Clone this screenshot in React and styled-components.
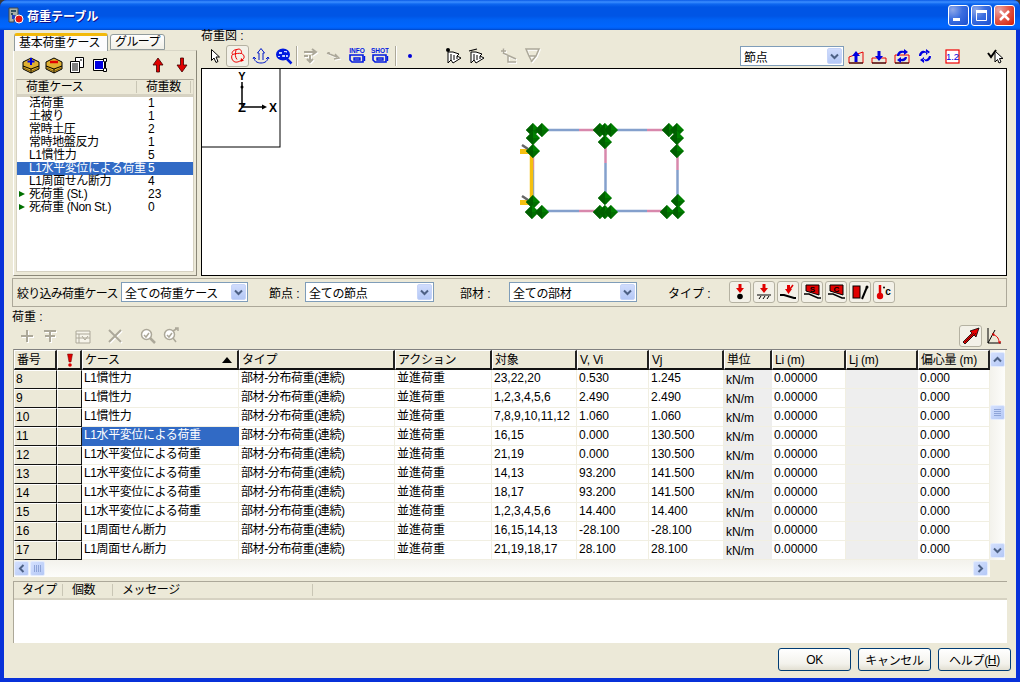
import React from 'react'
import styled, { createGlobalStyle } from 'styled-components'

const Global = createGlobalStyle`
  html, body { margin: 0; padding: 0; background: #3a3a3a; overflow: hidden; }
  * { box-sizing: border-box; }
`

const Window = styled.div`
  width: 1020px;
  height: 682px;
  display: flex;
  flex-direction: column;
  background: #0831d9;
  font-family: "Liberation Sans", "Noto Sans CJK JP", sans-serif;
  font-size: 12px;
  color: #000;
  border-radius: 7px 7px 0 0;
  overflow: hidden;
`

const TitleBar = styled.div`
  height: 30px;
  flex: none;
  display: flex;
  align-items: center;
  padding: 0 5px 0 7px;
  background: linear-gradient(180deg, #0a5ae6 0, #3c8eff 2px, #0f68f0 4px, #0055e5 7px, #0055e5 16px, #0062f5 20px, #0066ff 27px, #0058e8 29px, #0043bf 30px);
`

const TitleText = styled.span`
  margin-left: 2px;
  color: #fff;
  font-size: 12px;
  font-weight: bold;
  text-shadow: 1px 1px 0 #0f1089;
`

const TitleButtons = styled.div`
  margin-left: auto;
  display: flex;
  gap: 2px;
`

const CaptionButton = styled.div`
  width: 21px;
  height: 21px;
  border: 1px solid #fff;
  border-radius: 3px;
  display: flex;
  align-items: center;
  justify-content: center;
  background: ${p => p.$close
    ? 'radial-gradient(circle at 20% 20%, #e8a6a6 0, #e35b4c 45%, #d41a00 100%)'
    : 'radial-gradient(circle at 20% 20%, #8fa8e8 0, #3b6ee0 45%, #1a4fd0 100%)'};
`

const Body = styled.div`
  flex: 1;
  margin: 0 4px 4px;
  background: #ece9d8;
  display: flex;
  flex-direction: column;
  padding: 0 9px;
  min-height: 0;
`

const TopSection = styled.div`
  height: 248px;
  flex: none;
  display: flex;
`

const LeftPane = styled.div`
  width: 184px;
  flex: none;
  padding: 2px 0 2px;
  display: flex;
  flex-direction: column;
`

const TabStrip = styled.div`
  height: 18px;
  flex: none;
  display: flex;
  align-items: flex-end;
  padding-left: 1px;
  position: relative;
  z-index: 1;
`

const Tab = styled.div`
  height: ${p => (p.$active ? 18 : 16)}px;
  width: ${p => (p.$active ? 94 : 55)}px;
  margin-left: ${p => (p.$active ? 0 : 2)}px;
  margin-bottom: ${p => (p.$active ? -1 : 0)}px;
  padding-left: 4px;
  line-height: ${p => (p.$active ? 15 : 15)}px;
  white-space: nowrap;
  letter-spacing: ${p => (p.$active ? -0.3 : -0.6)}px;
  background: ${p => (p.$active ? '#fcfcfe' : 'linear-gradient(180deg, #fff, #f0efe6)')};
  border: 1px solid #919b9c;
  border-bottom: ${p => (p.$active ? 'none' : '1px solid #919b9c')};
  border-radius: 3px 3px 0 0;
  border-top: ${p => (p.$active ? '3px solid #f2b90a' : '1px solid #919b9c')};
`

const TabPanel = styled.div`
  flex: 1;
  border: 1px solid #8a8778;
  border-top-color: #d8d5c6;
  border-left-color: #fff;
  padding: 0 2px 3px 2px;
  display: flex;
  flex-direction: column;
  min-height: 0;
`

const PanelTools = styled.div`
  height: 28px;
  flex: none;
  display: flex;
  align-items: center;
  padding-left: 3px;
`

const PanelTool = styled.div`
  width: 23px;
  height: 20px;
  margin-left: ${p => p.$left || 0}px;
  display: flex;
  align-items: center;
  justify-content: center;
`

const CaseList = styled.div`
  flex: 1;
  background: #fff;
  border: 1px solid #d6d2c2;
  border-top-color: #aca899;
  min-height: 0;
`

const ListHead = styled.div`
  height: 17px;
  display: flex;
  align-items: center;
  background: #ece9d8;
  border-bottom: 3px solid #d6d2c2;
  letter-spacing: -0.4px;
`

const ListHeadCell = styled.div`
  width: ${p => p.$w}px;
  padding-left: ${p => p.$pad}px;
  height: 12px;
  line-height: 12px;
  border-right: 1px solid #c9c6b5;
`

const ListRow = styled.div`
  height: 13px;
  line-height: 13px;
  display: flex;
  white-space: nowrap;
  background: ${p => (p.$selected ? '#316ac5' : 'transparent')};
  color: ${p => (p.$selected ? '#fff' : '#000')};
`

const ListName = styled.div`
  width: 131px;
  padding-left: 12px;
  letter-spacing: -0.4px;
  position: relative;
`

const Expander = styled.span`
  position: absolute;
  left: 2px;
  top: 3px;
  width: 0;
  height: 0;
  border-left: 6px solid #007000;
  border-top: 3.5px solid transparent;
  border-bottom: 3.5px solid transparent;
`

const RightPane = styled.div`
  flex: 1;
  margin-left: 4px;
  display: flex;
  flex-direction: column;
  min-width: 0;
`

const PaneLabel = styled.div`
  height: 14px;
  line-height: 12px;
  flex: none;
`

const ViewTools = styled.div`
  height: 24px;
  flex: none;
  display: flex;
  align-items: center;
  padding-left: 2px;
`

const ToolButton = styled.div`
  width: 23px;
  height: 22px;
  flex: none;
  margin-left: ${p => p.$left || 0}px;
  display: flex;
  align-items: center;
  justify-content: center;
  border-radius: 3px;
  border: 1px solid ${p => (p.$pressed ? '#b5b2a2' : 'transparent')};
  background: ${p => (p.$pressed ? '#f3f1e8' : 'transparent')};
`

const ToolSep = styled.div`
  width: 2px;
  height: 20px;
  flex: none;
  margin: 0 1px 0 ${p => p.$left || 1}px;
  border-left: 1px solid #aca899;
  border-right: 1px solid #fff;
`

const Canvas = styled.div`
  height: 208px;
  flex: none;
  border: 1px solid #000;
  background: #fff;
`

const CanvasSvg = styled.svg`
  display: block;
`

const ComboBox = styled.div`
  width: ${p => p.$w}px;
  height: 20px;
  flex: none;
  margin-left: ${p => p.$left || 0}px;
  border: 1px solid #7f9db9;
  background: #fff;
  display: flex;
  align-items: center;
  padding: 0 1px 0 3px;
  letter-spacing: -0.3px;
  white-space: nowrap;
`

const ComboText = styled.span`
  flex: 1;
`

const ComboArrow = styled.div`
  width: 15px;
  height: 16px;
  flex: none;
  border-radius: 2px;
  background: linear-gradient(180deg, #d0dcfc, #b4c8f6);
  border: 1px solid #c6d4f8;
  display: flex;
  align-items: center;
  justify-content: center;
`

const FilterBar = styled.div`
  height: 29px;
  flex: none;
  margin-left: -1px;
  border: 1px solid #aca899;
  display: flex;
  align-items: center;
  padding: 0 0 1px 4px;
  white-space: nowrap;
`

const FilterLabel = styled.div`
  width: ${p => p.$w}px;
  margin-left: ${p => p.$left || 0}px;
  flex: none;
  letter-spacing: ${p => (p.$tight ? -0.75 : 0)}px;
`

const TypeGroup = styled.div`
  display: flex;
  gap: 2px;
  flex: none;
`

const TypeButton = styled.div`
  width: 22px;
  height: 22px;
  border: 1px solid #b5b2a2;
  border-radius: 3px;
  background: #f3f1e8;
  display: flex;
  align-items: center;
  justify-content: center;
`

const SectionLabel = styled.div`
  height: 18px;
  flex: none;
  margin-left: -1px;
  padding-top: 3px;
  line-height: 14px;
`

const LoadTools = styled.div`
  height: 24px;
  flex: none;
  display: flex;
  align-items: flex-start;
`

const GridFrame = styled.div`
  height: 228px;
  flex: none;
  border-top: 1px solid #808080;
  border-left: 1px solid #aca899;
  display: grid;
  grid-template-columns: 976px 17px;
  grid-template-rows: 210px 17px;
`

const GridMain = styled.div`
  background: #fff;
  overflow: hidden;
`

const GridRow = styled.div`
  display: grid;
  grid-template-columns: 43px 25px 157px 156px 97px 85px 72px 75px 48px 74px 72px 72px;
  height: ${p => (p.$head ? 20 : 19)}px;
`

const HeadCell = styled.div`
  background: #ece9d8;
  border-top: 1px solid #fff;
  border-left: 1px solid #fff;
  border-right: 2px solid #222;
  border-bottom: 2px solid #111;
  padding: 1px 0 0 2px;
  line-height: 15px;
  letter-spacing: -0.2px;
  white-space: nowrap;
  display: flex;
  align-items: center;
  justify-content: ${p => (p.$center ? 'center' : 'flex-start')};
`

const SortMark = styled.span`
  margin-left: auto;
  margin-right: 5px;
  width: 0;
  height: 0;
  border-left: 5px solid transparent;
  border-right: 5px solid transparent;
  border-bottom: 6px solid #000;
`

const FixedCell = styled.div`
  background: #ece9d8;
  border-top: 1px solid #fff;
  border-left: 1px solid #fff;
  border-right: 1px solid #111;
  border-bottom: 1px solid #111;
  padding-left: 1px;
  line-height: 17px;
`

const DataCell = styled.div`
  background: ${p => (p.$selected ? '#316ac5' : p.$shaded ? '#eeeeee' : '#fff')};
  color: ${p => (p.$selected ? '#fff' : '#000')};
  border-right: 1px solid ${p => (p.$selected || p.$shaded ? 'transparent' : '#f1efe2')};
  border-bottom: 1px solid ${p => (p.$selected ? 'transparent' : '#f1efe2')};
  padding-left: 2px;
  padding-top: ${p => (p.$unit ? 2 : 0)}px;
  line-height: 17px;
  white-space: nowrap;
  overflow: hidden;
  letter-spacing: ${p => (p.$tight ? -0.4 : 0)}px;
`

const VScroll = styled.div`
  grid-row: 1;
  grid-column: 2;
  width: 15px;
  padding-top: 2px;
  background: linear-gradient(90deg, #f3f2ec, #fdfdfb);
  display: flex;
  flex-direction: column;
  align-items: center;
`

const HScroll = styled.div`
  grid-row: 2;
  grid-column: 1;
  background: linear-gradient(180deg, #f3f2ec, #fdfdfb);
  display: flex;
  align-items: center;
`

const ScrollButton = styled.div`
  width: 15px;
  height: 15px;
  flex: none;
  margin-left: ${p => (p.$h ? p.$left || 0 : 0)}px;
  margin-top: ${p => (!p.$h ? p.$top || 0 : 0)}px;
  border-radius: 2px;
  border: 1px solid #e4ecfd;
  background: linear-gradient(135deg, #d4e0fd, #b4c8f6);
  display: flex;
  align-items: center;
  justify-content: center;
`

const MessageList = styled.div`
  height: 62px;
  flex: none;
  margin-top: 4px;
  background: #fff;
  border-top: 1px solid #aca899;
  border-left: 1px solid #aca899;
`

const MessageHead = styled.div`
  height: 18px;
  display: flex;
  align-items: center;
  background: #ece9d8;
  border-bottom: 2px solid #d6d2c2;
  letter-spacing: -0.4px;
`

const MessageCell = styled.div`
  width: ${p => p.$w}px;
  padding-left: ${p => p.$pad}px;
  height: 12px;
  line-height: 12px;
  border-right: 1px solid #c9c6b5;
`

const Footer = styled.div`
  height: 35px;
  flex: none;
  margin-right: -4px;
  display: flex;
  justify-content: flex-end;
  align-items: flex-start;
  gap: 7px;
  padding-top: 5px;
`

const DialogButton = styled.div`
  width: 73px;
  height: 23px;
  border: 1px solid #003c74;
  border-radius: 3px;
  background: linear-gradient(180deg, #fff 0, #f3f2ec 70%, #e2dfd2 100%);
  display: flex;
  align-items: center;
  justify-content: center;
  letter-spacing: -0.3px;
`

const Underlined = styled.span`
  text-decoration: underline;
`

/* toolbar and canvas drawings */

const Ico = ({ w = 20, h = 20, children }) => (
  <svg width={w} height={h} viewBox={`0 0 ${w} ${h}`}>{children}</svg>
)

const Chevron = ({ dir = 'down', color = '#4d6185' }) => {
  const rot = { down: 0, up: 180, left: 90, right: -90 }[dir]
  return (
    <svg width="9" height="9" viewBox="0 0 9 9">
      <path d="M1 2.5l3.5 3.5L8 2.5" fill="none" stroke={color} strokeWidth="2" transform={`rotate(${rot} 4.5 4.5)`} />
    </svg>
  )
}

const AppIcon = () => (
  <svg width="18" height="18" viewBox="0 0 18 18">
    <path d="M2 2h9v8H7v6H2z" fill="#a8b0a8" stroke="#40484c" />
    <path d="M4 4h5v2H4zM4 7h2v2H4z" fill="#305060" />
    <path d="M5 9h3v4H5z" fill="#2040c0" />
    <circle cx="12" cy="13" r="4" fill="#e01818" stroke="#fff" />
  </svg>
)

const BoxIcon = ({ mark }) => (
  <Ico w={18} h={18}>
    <path d="M1 6l8-4 8 4v7l-8 4-8-4z" fill="#e0b030" stroke="#000" />
    <path d="M1 10l8 3 8-3M9 13v4" fill="none" stroke="#000" />
    <path d="M2 12l6 3M10 15l6-3" stroke="#806010" />
    {mark === 'plus' && <path d="M9 2v7M5.500 5.500h7" stroke="#0000e0" strokeWidth="2" />}
    {mark === 'minus' && <path d="M5 6h8" stroke="#e00000" strokeWidth="2.500" />}
  </Ico>
)

const CopyIcon = () => (
  <Ico w={16} h={18}>
    <path d="M6.500 1.500h8v10h-8z" fill="#fff" stroke="#000" />
    <path d="M1.500 5.500h9v11h-9z" fill="#fff" stroke="#000" />
    <path d="M3 8h6M3 10h6M3 12h6M3 14h6M11 4h2" stroke="#000" />
  </Ico>
)

const FrameIcon = () => (
  <Ico w={16} h={16}>
    <path d="M1.500 2.500h12v11h-12z" fill="#fff" stroke="#000" />
    <path d="M3 4h8v8H3z" fill="#0000e0" />
    <path d="M11.500 1.500h3v3h-1v7h1v3h-3v-3h1v-7h-1z" fill="#fff" stroke="#000" />
  </Ico>
)

const RedArrow = ({ down }) => (
  <Ico w={12} h={16}>
    <path d={down ? 'M4.500 1h3v7H11l-5 7-5-7h3.500z' : 'M4.500 15h3V8H11L6 1 1 8h3.500z'} fill="#e00000" stroke="#400000" strokeWidth="0.800" />
  </Ico>
)

const Cursor = () => (
  <Ico w={14} h={16}>
    <path d="M3.500 1.500v11l2.500-2.500 2 4.500 2-1-2-4.500h3.500z" fill="#fff" stroke="#000" />
  </Ico>
)

const RotateIcon = () => (
  <Ico w={18} h={18}>
    <path d="M8 2.500c3-1.500 5 1 4.500 4C16 8 16 12 12.500 13c-2 1.500-5 3-7.500 1.500C2.500 13 2 9 3.500 7.500 2 5 5 2.500 8 2.500zM7 3c-1 4-1 7 1 9.500" fill="none" stroke="#f00000" />
    <path d="M3.500 7.500c3-1 7-1.500 9-1" fill="none" stroke="#f00000" />
    <path d="M12 11l3 2.500-3.500 1.500z" fill="#f00000" />
  </Ico>
)

const AnchorIcon = () => (
  <Ico w={18} h={18}>
    <path d="M7 13V6H5.500L9 1.500 12.500 6H11v7" fill="none" stroke="#0018c8" />
    <path d="M2 10c0 4 3 6 7 6s7-2 7-6M2 10l-1 2M2 10l2 2M16 10l1 2M16 10l-2 2" fill="none" stroke="#0018c8" />
  </Ico>
)

const ZoomBallIcon = () => (
  <Ico w={18} h={18}>
    <ellipse cx="8" cy="7.500" rx="7" ry="6" fill="#0018e0" />
    <path d="M4 5h3v2H4zM9 4h3v2H9zM7 8h3v2H7zM3 9h2v1H3zM11 8h2v2h-2z" fill="#c8d4ff" />
    <circle cx="10" cy="9" r="3.500" fill="none" stroke="#0018e0" />
    <path d="M12 12l4.500 4.500" stroke="#0018e0" strokeWidth="2.500" />
  </Ico>
)

const GrayShadow = ({ d, width = 1.500 }) => (
  <>
    <path d={d} fill="none" stroke="#fff" strokeWidth={width} transform="translate(1 1)" />
    <path d={d} fill="none" stroke="#aca899" strokeWidth={width} />
  </>
)

const MoveGrayA = () => (
  <Ico w={18} h={18}><GrayShadow d="M2 5h12M10 2l4 3-4 3M8 8v7M5 12l3 3 3-3M2 9h4" width={2} /></Ico>
)

const MoveGrayB = () => (
  <Ico w={18} h={18}><GrayShadow d="M2 6l10 4M10 7l4 4-5 1M3 6h2" width={1.500} /></Ico>
)

const CameraIcon = ({ label }) => (
  <Ico w={18} h={18}>
    <text x="9" y="6" fontSize="6.500" fontWeight="bold" textAnchor="middle" fill="#0018e0" fontFamily="'Liberation Sans', sans-serif">{label}</text>
    <path d="M2 8h13v7H4l-2-2z" fill="none" stroke="#0018e0" strokeWidth="1.600" />
    <path d="M6 11h6v2H6zM16.500 9v5" fill="none" stroke="#0018e0" strokeWidth="1.400" />
  </Ico>
)

const NodeDot = () => (
  <Ico w={10} h={10}><circle cx="5" cy="5" r="2" fill="#0000d8" /></Ico>
)

const StripedCursor = ({ variant }) => (
  <Ico w={18} h={18}>
    {variant === 'dot' && <circle cx="3" cy="3" r="2" fill="#000" />}
    {variant === 'line' && <path d="M1 4l8-2" stroke="#000" strokeWidth="1.200" />}
    <path d="M3 5v11l3-3 2 3 8-5-4-2 2-2-6-2z" fill="#fff" stroke="#000" />
    <path d="M6 7v6M9 8v5M12 9v3" stroke="#000" />
  </Ico>
)

const GrayLineA = () => (
  <Ico w={18} h={18}><GrayShadow d="M1 4h5M3.500 1.500v5M3 6l13 6M8 9v6h8" /></Ico>
)

const GrayLineB = () => (
  <Ico w={18} h={18}><GrayShadow d="M3 2h13l-3 7H6zM6 9l3 6M13 9L8 15" /></Ico>
)

const UpLoadIcon = () => (
  <Ico w={16} h={16}>
    <path d="M1 15V9l14-5v11z" fill="none" stroke="#e80000" />
    <path d="M1 15h14" stroke="#000" />
    <path d="M6.500 14V8H4l4-5 4 5H9.500v6z" fill="#0000e0" />
  </Ico>
)

const DownLoadIcon = () => (
  <Ico w={16} h={16}>
    <path d="M1 15v-5h14v5z" fill="none" stroke="#e80000" />
    <path d="M1 15h14" stroke="#000" />
    <path d="M6.500 3v5H4l4 5 4-5H9.500V3z" fill="#0000e0" />
  </Ico>
)

const SwapBoxIcon = () => (
  <Ico w={16} h={16}>
    <path d="M1 15V7h14v8z" fill="none" stroke="#e80000" />
    <path d="M1 15h14" stroke="#000" />
    <path d="M3 8c0-4 3-6 7-5V1l4 3-4 3V5C8 4 6 5 5 8z" fill="#0000e0" />
    <path d="M13 9c0 3-3 5-6 4v2l-4-3 4-3v2c2 0 3-1 4-2z" fill="#0000e0" />
  </Ico>
)

const SwapIcon = () => (
  <Ico w={16} h={16}>
    <path d="M2 8c0-4 3-6 7-5V1l4 3-4 3V5C7 4 5 5 4 8z" fill="#0000e0" />
    <path d="M14 8c0 4-3 6-7 5v2l-4-3 4-3v2c2 1 4 0 5-3z" fill="#0000e0" />
    <path d="M7 2l7 6M3 8l6 6" stroke="#fff" strokeDasharray="1 1" />
  </Ico>
)

const ValueIcon = () => (
  <Ico w={15} h={15}>
    <rect x="1" y="1" width="13" height="13" fill="#fff" stroke="#f00000" strokeWidth="1.200" />
    <text x="7.500" y="11" fontSize="9.500" textAnchor="middle" fill="#0000e0" fontFamily="'Liberation Sans', sans-serif">1.2</text>
  </Ico>
)

const CheckCursor = () => (
  <Ico w={18} h={18}>
    <path d="M1 6l3 4 5-7" fill="none" stroke="#000" strokeWidth="2" />
    <path d="M8 4v11l2.500-2.500 1.500 3.500 2-1-1.500-3.500H16z" fill="#fff" stroke="#000" />
  </Ico>
)

const PointLoad = () => (
  <Ico w={16} h={16}>
    <path d="M6.500 0h3v4H12L8 9 4 4h2.500z" fill="#e00000" />
    <circle cx="8" cy="12.500" r="2.800" fill="#000" />
  </Ico>
)

const GroundLoad = () => (
  <Ico w={18} h={16}>
    <path d="M7.500 0h3v4H13L9 9 5 4h2.500z" fill="#e00000" />
    <path d="M2 11h14M4 15l2-3M8 15l2-3M12 15l2-3" stroke="#000" />
  </Ico>
)

const MemberLoad = () => (
  <Ico w={18} h={16}>
    <path d="M1 11h4l10 3h2" fill="none" stroke="#000" strokeWidth="2" />
    <path d="M8 1h3v4h2L9.500 10 6 5h2z" fill="#e00000" />
    <path d="M14 1l-3 4" stroke="#e00000" strokeWidth="1.500" />
  </Ico>
)

const AreaLoad = ({ label }) => (
  <Ico w={18} h={16}>
    <path d="M3 1h13v10L3 7z" fill="#e00000" stroke="#000" />
    <path d="M1 10h5l9 4h3" fill="none" stroke="#000" strokeWidth="1.600" />
    <text x="9.500" y="8" fontSize="8" fontWeight="bold" textAnchor="middle" fill="#000" fontFamily="'Liberation Sans', sans-serif">{label}</text>
  </Ico>
)

const StrainLoad = () => (
  <Ico w={18} h={16}>
    <rect x="2" y="2" width="7" height="12" fill="#e00000" stroke="#000" />
    <path d="M11 15L16 3" stroke="#000" strokeWidth="2" />
    <circle cx="16" cy="3" r="1.500" fill="#000" />
  </Ico>
)

const TempLoad = () => (
  <Ico w={18} h={16}>
    <path d="M5 1v9" stroke="#e00000" strokeWidth="2.500" />
    <circle cx="5" cy="12" r="3.200" fill="#e00000" />
    <text x="13" y="11" fontSize="10" fontWeight="bold" textAnchor="middle" fill="#000" fontFamily="'Liberation Sans', sans-serif">c</text>
    <circle cx="9" cy="3.500" r="1" fill="#000" />
  </Ico>
)

const PlusGray = () => <Ico w={16} h={16}><GrayShadow d="M8 2v12M2 8h12" width={2} /></Ico>
const RowGray = () => <Ico w={16} h={16}><GrayShadow d="M2 3h12M3 8h10M8 3v11" width={2} /></Ico>
const TableGray = () => (
  <Ico w={18} h={16}>
    <path d="M2 3h14v12H2z" fill="#f6f4ea" stroke="#aca899" />
    <path d="M2 6h14M5 6v9M2 10h14M8 8l3 4 3-4" fill="none" stroke="#aca899" />
  </Ico>
)
const CrossGray = () => <Ico w={16} h={16}><GrayShadow d="M2 2l12 12M14 2L2 14" width={2} /></Ico>
const MagnifyGray = ({ arrow }) => (
  <Ico w={18} h={18}>
    <circle cx="7.500" cy="7.500" r="5" fill="#fff" stroke="#aca899" strokeWidth="1.500" />
    <path d="M5 8l2 2 3-4" fill="none" stroke="#aca899" strokeWidth="1.500" />
    <path d={arrow ? 'M11 4l5-3M13 1h3v3M11 11l3 4' : 'M11 11l5 5'} fill="none" stroke="#aca899" strokeWidth={arrow ? 1.500 : 2.500} />
  </Ico>
)

const RedPointer = () => (
  <Ico w={18} h={18}>
    <path d="M1 15l9-9-2-2 9-3-3 9-2-2-9 9z" fill="#e80000" stroke="#000" strokeWidth="0.800" />
    <path d="M3 15l9-9M5 15l9-9" stroke="#000" strokeWidth="0.500" />
  </Ico>
)

const AxisAngle = () => (
  <Ico w={16} h={18}>
    <path d="M2 1v15h13M2 16L9 3" fill="none" stroke="#000" />
    <path d="M7 8c3 0 6 3 6 7" fill="none" stroke="#e00000" />
    <path d="M6 6l3 1-2 2zM12 15l3-1-1 3z" fill="#e00000" />
  </Ico>
)

const Diamond = ({ x, y }) => (
  <g>
    <path d={`M${x} ${y - 7}l7 7-7 7-7-7z`} fill="#008000" />
    <path d={`M${x} ${y - 7}l-7 7 7 7z`} fill="#006000" />
    <path d={`M${x - 7} ${y}h14l-7 7z`} fill="#005c00" opacity="0.5" />
  </g>
)

// canvas coordinates are page coordinates minus the canvas origin (202, 69)
const nodes = [
  [331, 61], [340, 61], [331, 69], [331, 82], [331, 133], [330, 143], [340, 143],
  [398, 61], [403, 61], [409, 61], [403, 73], [403, 129], [398, 143], [403, 143], [409, 143],
  [467, 61], [475, 61], [475, 69], [475, 82], [476, 132], [476, 143], [465, 143],
]

const beams = [
  ['#84a0cc', 331, 61, 377, 61], ['#d888ac', 377, 61, 393, 61],
  ['#84a0cc', 403, 61, 445, 61], ['#d888ac', 445, 61, 461, 61], ['#84a0cc', 461, 61, 475, 61],
  ['#84a0cc', 331, 142, 377, 142], ['#d888ac', 377, 142, 393, 142],
  ['#84a0cc', 403, 142, 445, 142], ['#d888ac', 445, 142, 461, 142], ['#84a0cc', 461, 142, 475, 142],
  ['#d888ac', 403.500, 75, 403.500, 94], ['#84a0cc', 403.500, 94, 403.500, 135],
  ['#d888ac', 475.500, 75, 475.500, 101], ['#84a0cc', 475.500, 101, 475.500, 135],
  ['#d888ac', 331, 75, 331, 101], ['#84a0cc', 331, 101, 331, 135],
]

const ModelView = () => (
  <CanvasSvg width="804" height="206" viewBox="0 0 804 206">
    <rect x="-1" y="-1" width="79" height="79" fill="#fff" stroke="#000" />
    <path d="M40 38V13" stroke="#000" strokeWidth="1.500" />
    <circle cx="40" cy="18" r="1.500" fill="#000" />
    <path d="M40 38h22" stroke="#000" strokeWidth="1.500" />
    <path d="M60 35.500l5 2.500-5 2.500z" fill="#000" />
    <text x="40" y="11" fontSize="11" fontWeight="bold" textAnchor="middle" fontFamily="'Liberation Sans', sans-serif">Y</text>
    <text x="40" y="43" fontSize="13" fontWeight="bold" textAnchor="middle" fontFamily="'Liberation Sans', sans-serif">Z</text>
    <text x="71" y="43" fontSize="12" fontWeight="bold" textAnchor="middle" fontFamily="'Liberation Sans', sans-serif">X</text>
    {beams.map(([c, x1, y1, x2, y2], i) => (
      <line key={i} x1={x1} y1={y1} x2={x2} y2={y2} stroke={c} strokeWidth="2.500" />
    ))}
    <path d="M329.500 84v50" stroke="#f5c010" strokeWidth="3.500" />
    <path d="M318 80h9v5h-9zM318 131h9v5h-9z" fill="#f5c010" />
    <path d="M320 76l6 4M320 127l6 4" stroke="#666" strokeWidth="2.500" />
    {nodes.map(([x, y], i) => <Diamond key={i} x={x} y={y} />)}
  </CanvasSvg>
)

const cases = [
  ['活荷重', '1'], ['土被り', '1'], ['常時土圧', '2'], ['常時地盤反力', '1'], ['L1慣性力', '5'],
  ['L1水平変位による荷重', '5', 'selected'], ['L1周面せん断力', '4'],
  ['死荷重 (St.)', '23', 'group'], ['死荷重 (Non St.)', '0', 'group'],
]

const columns = ['番号', '', 'ケース', 'タイプ', 'アクション', '対象', 'V, Vi', 'Vj', '単位', 'Li (m)', 'Lj (m)', '偏心量 (m)']

const INERTIA = 'L1慣性力'
const DISPLACEMENT = 'L1水平変位による荷重'
const SHEAR = 'L1周面せん断力'

const loads = [
  [8, INERTIA, '23,22,20', '0.530', '1.245'],
  [9, INERTIA, '1,2,3,4,5,6', '2.490', '2.490'],
  [10, INERTIA, '7,8,9,10,11,12', '1.060', '1.060'],
  [11, DISPLACEMENT, '16,15', '0.000', '130.500', true],
  [12, DISPLACEMENT, '21,19', '0.000', '130.500'],
  [13, DISPLACEMENT, '14,13', '93.200', '141.500'],
  [14, DISPLACEMENT, '18,17', '93.200', '141.500'],
  [15, DISPLACEMENT, '1,2,3,4,5,6', '14.400', '14.400'],
  [16, SHEAR, '16,15,14,13', '-28.100', '-28.100'],
  [17, SHEAR, '21,19,18,17', '28.100', '28.100'],
]

const Combo = ({ w, left, text }) => (
  <ComboBox $w={w} $left={left}>
    <ComboText>{text}</ComboText>
    <ComboArrow><Chevron /></ComboArrow>
  </ComboBox>
)

const App = () => (
  <Window>
    <Global />
    <TitleBar>
      <AppIcon />
      <TitleText>荷重テーブル</TitleText>
      <TitleButtons>
        <CaptionButton>
          <svg width="13" height="13" viewBox="0 0 13 13"><path d="M1 9h7v3H1z" fill="#fff" /></svg>
        </CaptionButton>
        <CaptionButton>
          <svg width="13" height="13" viewBox="0 0 13 13"><path d="M1.500 3.500h10v8h-10z" fill="none" stroke="#fff" /><path d="M1 1h11v3H1z" fill="#fff" /></svg>
        </CaptionButton>
        <CaptionButton $close>
          <svg width="13" height="13" viewBox="0 0 13 13"><path d="M2 2l9 9M11 2l-9 9" stroke="#fff" strokeWidth="2.500" /></svg>
        </CaptionButton>
      </TitleButtons>
    </TitleBar>
    <Body>
      <TopSection>
        <LeftPane>
          <TabStrip>
            <Tab $active>基本荷重ケース</Tab>
            <Tab>グループ</Tab>
          </TabStrip>
          <TabPanel>
            <PanelTools>
              <PanelTool><BoxIcon mark="plus" /></PanelTool>
              <PanelTool><BoxIcon mark="minus" /></PanelTool>
              <PanelTool><CopyIcon /></PanelTool>
              <PanelTool><FrameIcon /></PanelTool>
              <PanelTool $left={35}><RedArrow /></PanelTool>
              <PanelTool $left={1}><RedArrow down /></PanelTool>
            </PanelTools>
            <CaseList>
              <ListHead>
                <ListHeadCell $w={120} $pad={9}>荷重ケース</ListHeadCell>
                <ListHeadCell $w={54} $pad={9}>荷重数</ListHeadCell>
              </ListHead>
              {cases.map(([name, count, kind]) => (
                <ListRow key={name} $selected={kind === 'selected'}>
                  <ListName>
                    {kind === 'group' && <Expander />}
                    {name}
                  </ListName>
                  <span>{count}</span>
                </ListRow>
              ))}
            </CaseList>
          </TabPanel>
        </LeftPane>
        <RightPane>
          <PaneLabel>荷重図 :</PaneLabel>
          <ViewTools>
            <ToolButton><Cursor /></ToolButton>
            <ToolButton $pressed><RotateIcon /></ToolButton>
            <ToolButton><AnchorIcon /></ToolButton>
            <ToolButton><ZoomBallIcon /></ToolButton>
            <ToolSep />
            <ToolButton><MoveGrayA /></ToolButton>
            <ToolButton><MoveGrayB /></ToolButton>
            <ToolButton><CameraIcon label="INFO" /></ToolButton>
            <ToolButton><CameraIcon label="SHOT" /></ToolButton>
            <ToolSep $left={4} />
            <ToolButton><NodeDot /></ToolButton>
            <ToolButton $left={21}><StripedCursor variant="dot" /></ToolButton>
            <ToolButton><StripedCursor variant="line" /></ToolButton>
            <ToolButton $left={9}><GrayLineA /></ToolButton>
            <ToolButton><GrayLineB /></ToolButton>
            <Combo w={104} left={197} text="節点" />
            <ToolButton><UpLoadIcon /></ToolButton>
            <ToolButton><DownLoadIcon /></ToolButton>
            <ToolButton><SwapBoxIcon /></ToolButton>
            <ToolButton><SwapIcon /></ToolButton>
            <ToolButton $left={5}><ValueIcon /></ToolButton>
            <ToolButton $left={20}><CheckCursor /></ToolButton>
          </ViewTools>
          <Canvas><ModelView /></Canvas>
        </RightPane>
      </TopSection>

      <FilterBar>
        <FilterLabel $w={104} $tight>絞り込み荷重ケース</FilterLabel>
        <Combo w={127} text="全ての荷重ケース" />
        <FilterLabel $w={36} $left={21}>節点 :</FilterLabel>
        <Combo w={129} text="全ての節点" />
        <FilterLabel $w={49} $left={26}>部材 :</FilterLabel>
        <Combo w={128} text="全ての部材" />
        <FilterLabel $w={61} $left={31}>タイプ :</FilterLabel>
        <TypeGroup>
          <TypeButton><PointLoad /></TypeButton>
          <TypeButton><GroundLoad /></TypeButton>
          <TypeButton><MemberLoad /></TypeButton>
          <TypeButton><AreaLoad label="S" /></TypeButton>
          <TypeButton><AreaLoad label="C" /></TypeButton>
          <TypeButton><StrainLoad /></TypeButton>
          <TypeButton><TempLoad /></TypeButton>
        </TypeGroup>
      </FilterBar>

      <SectionLabel>荷重 :</SectionLabel>
      <LoadTools>
        <ToolButton $left={2}><PlusGray /></ToolButton>
        <ToolButton><RowGray /></ToolButton>
        <ToolButton $left={10}><TableGray /></ToolButton>
        <ToolButton $left={9}><CrossGray /></ToolButton>
        <ToolButton $left={10}><MagnifyGray /></ToolButton>
        <ToolButton><MagnifyGray arrow /></ToolButton>
        <ToolButton $pressed $left={777}><RedPointer /></ToolButton>
        <ToolButton><AxisAngle /></ToolButton>
      </LoadTools>

      <GridFrame>
        <GridMain>
          <GridRow $head>
            {columns.map((col, i) => (
              <HeadCell key={i} $center={i === 1}>
                {i === 1
                  ? <svg width="6" height="14" viewBox="0 0 6 14"><path d="M0.500 1h5L4 9H2z" fill="#e00000" stroke="#600" strokeWidth="0.500" /><circle cx="3" cy="12" r="1.800" fill="#e00000" /></svg>
                  : col}
                {i === 2 && <SortMark />}
              </HeadCell>
            ))}
          </GridRow>
          {loads.map(([no, name, target, vi, vj, selected]) => (
            <GridRow key={no}>
              <FixedCell>{no}</FixedCell>
              <FixedCell />
              <DataCell $selected={selected} $tight>{name}</DataCell>
              <DataCell $tight>部材-分布荷重(連続)</DataCell>
              <DataCell>並進荷重</DataCell>
              <DataCell>{target}</DataCell>
              <DataCell>{vi}</DataCell>
              <DataCell>{vj}</DataCell>
              <DataCell $shaded $unit>kN/m</DataCell>
              <DataCell>0.00000</DataCell>
              <DataCell $shaded />
              <DataCell>0.000</DataCell>
            </GridRow>
          ))}
        </GridMain>
        <VScroll>
          <ScrollButton><Chevron dir="up" /></ScrollButton>
          <ScrollButton $top={38}>
            <svg width="9" height="9" viewBox="0 0 9 9"><path d="M1 1.500h7M1 3.500h7M1 5.500h7M1 7.500h7" stroke="#8ea4d8" /></svg>
          </ScrollButton>
          <ScrollButton $top={123}><Chevron /></ScrollButton>
        </VScroll>
        <HScroll>
          <ScrollButton $h><Chevron dir="left" /></ScrollButton>
          <ScrollButton $h $left={1}>
            <svg width="9" height="9" viewBox="0 0 9 9"><path d="M1.500 1v7M3.500 1v7M5.500 1v7M7.500 1v7" stroke="#8ea4d8" /></svg>
          </ScrollButton>
          <ScrollButton $h $left={928}><Chevron dir="right" /></ScrollButton>
        </HScroll>
      </GridFrame>

      <MessageList>
        <MessageHead>
          <MessageCell $w={49} $pad={8}>タイプ</MessageCell>
          <MessageCell $w={50} $pad={9}>個数</MessageCell>
          <MessageCell $w={200} $pad={9}>メッセージ</MessageCell>
        </MessageHead>
      </MessageList>

      <Footer>
        <DialogButton>OK</DialogButton>
        <DialogButton>キャンセル</DialogButton>
        <DialogButton>ヘルプ(<Underlined>H</Underlined>)</DialogButton>
      </Footer>
    </Body>
  </Window>
)

export default App
